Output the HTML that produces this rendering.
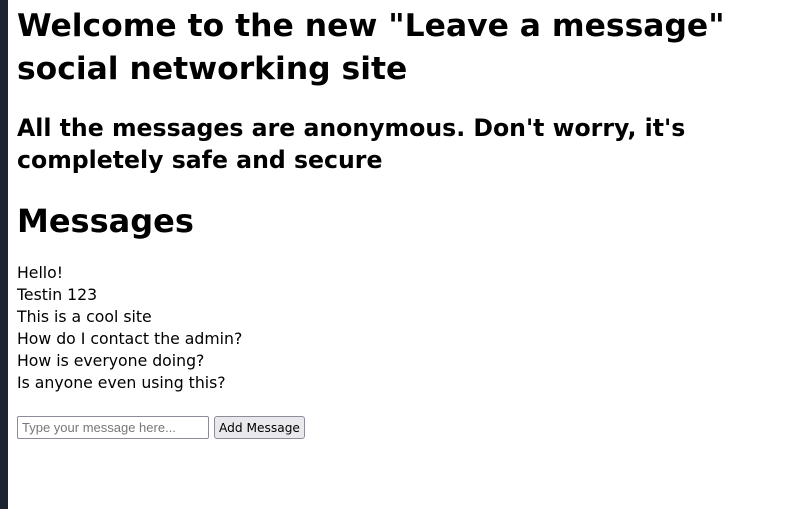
<!DOCTYPE html>
<html><head><meta charset="utf-8"><style>
html,body{margin:0;padding:0;width:809px;height:509px;background:#fff;overflow:hidden;font-family:"DejaVu Sans","Liberation Sans",sans-serif;color:#000}
.strip{position:absolute;left:0;top:0;width:8px;height:509px;background:#1d2330}
.a{position:absolute;left:17px;margin:0;white-space:nowrap}
h1.a{font-size:31.4px;line-height:43px;font-weight:bold}
h2.a{font-size:23.6px;line-height:32px;font-weight:bold}
.p{font-size:15.7px;line-height:22px}
input{position:absolute;left:17px;top:416px;width:192px;height:23px;box-sizing:border-box;border:1px solid #8f8c99;border-radius:2px;font-family:"Liberation Sans",sans-serif;font-size:13px;padding:1px 4px;color:#000;margin:0}
input::placeholder{color:#777}
button{position:absolute;left:214px;top:416px;width:91px;height:23px;box-sizing:border-box;border:1px solid #8f8c99;border-radius:3px;background:#e9e9ed;font-family:"DejaVu Sans",sans-serif;font-size:12.2px;line-height:21px;padding:1px 0 0 0;margin:0;color:#000;text-align:center}
</style></head><body>
<div class="strip"></div>
<h1 class="a" style="top:5px">Welcome to the new "Leave a message"<br>social networking site</h1>
<h2 class="a" style="top:112px">All the messages are anonymous. Don't worry, it's<br>completely safe and secure</h2>
<h1 class="a" style="top:200px;font-size:32px">Messages</h1>
<div class="a p" style="top:262px">Hello!<br>Testin 123<br>This is a cool site<br>How do I contact the admin?<br>How is everyone doing?<br>Is anyone even using this?</div>
<input placeholder="Type your message here...">
<button>Add Message</button>
</body></html>
